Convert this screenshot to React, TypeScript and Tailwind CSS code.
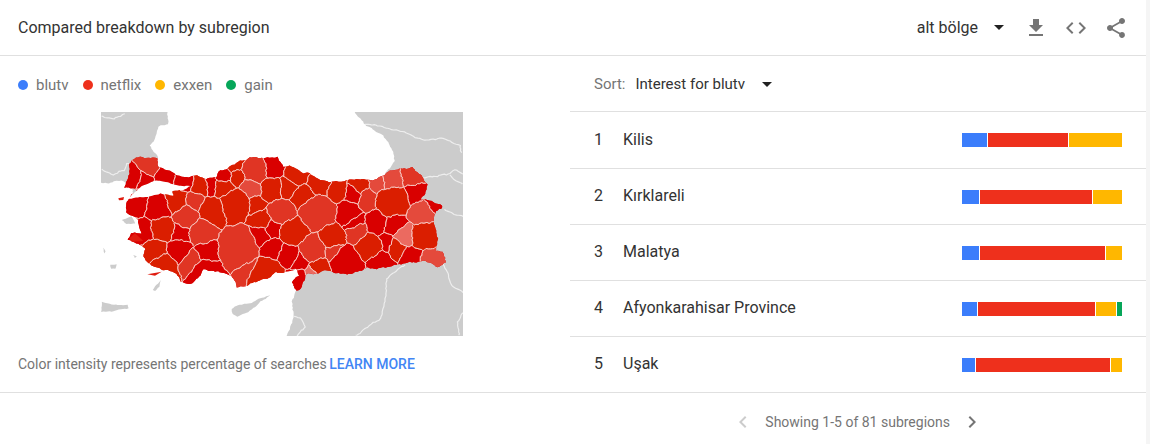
type Pt = [number, number];

const D = "#d90000", M = "#da1e00", L = "#e03524", P = "#e44a3c", X = "#eb6a60";

const provinces: [string, string][] = [
  [D, "120,175 147,168 148,205 135,225 132,248 105,250 115,215"],
  [L, "150,155 200,160 205,185 190,195 150,205 148,175"],
  [D, "150,207 190,197 178,215 150,226 140,246 136,226"],
  [D, "205,190 255,212 255,228 220,225 205,215"],
  [D, "258,212 315,215 310,235 275,240 258,230"],
  [D, "110,285 150,258 175,265 172,300 150,322 105,325 115,300"],
  [D, "175,270 210,270 250,320 235,345 200,335 175,332 172,300"],
  [M, "212,265 295,265 290,300 250,320"],
  [L, "295,270 330,285 322,300 295,307"],
  [M, "320,215 350,225 350,250 305,265"],
  [D, "350,225 385,225 370,245 350,250"],
  [D, "378,205 420,190 420,205 400,222 380,222"],
  [M, "420,175 450,170 455,190 420,198"],
  [L, "455,165 525,160 535,205 520,235 495,215 440,225 465,195"],
  [D, "530,165 565,155 585,205 560,205 540,190"],
  [M, "410,220 460,190 465,205 435,235"],
  [M, "345,270 395,235 430,225 438,240 390,265"],
  [P, "440,240 490,225 515,240 515,270 470,255"],
  [M, "400,280 430,245 470,260 490,280 470,330 470,345 400,355 410,320 395,290"],
  [M, "330,290 395,290 410,320 400,345 340,355 325,320"],
  [L, "250,325 295,307 322,320 325,345 300,365 255,350"],
  [M, "175,337 235,350 255,365 245,405 205,395 170,380"],
  [D, "140,340 175,335 170,385 210,400 160,405 120,410 150,370"],
  [D, "255,370 300,365 295,395 250,405"],
  [L, "300,370 345,345 390,345 385,375 350,395 300,430 290,420"],
  [D, "245,410 290,395 295,425 275,445 275,495 240,465"],
  [M, "165,410 240,420 240,445 175,455 160,440"],
  [M, "170,455 240,450 270,495 260,510 215,490 175,480"],
  [L, "280,440 320,440 350,470 310,470 285,490 275,480"],
  [D, "310,435 360,392 385,425 375,465 350,465 330,440"],
  [D, "265,510 295,480 350,470 375,465 415,490 435,520 438,545 400,510 340,495 325,520 300,540 270,530"],
  [L, "390,360 465,345 480,380 470,415 530,455 525,470 470,455 445,490 440,515 375,465 385,425 378,375"],
  [L, "447,490 470,457 525,468 520,475 470,490 450,515"],
  [M, "442,520 452,492 530,472 570,465 605,495 620,515 560,510 520,530 440,550"],
  [M, "475,320 495,275 515,285 520,305 485,330"],
  [M, "480,335 520,310 545,340 525,360 500,365"],
  [D, "470,410 500,365 525,360 530,400 525,410 510,420"],
  [D, "530,365 545,340 565,360 565,395 535,400"],
  [D, "515,420 535,405 575,410 570,440 550,460 530,455"],
  [M, "515,295 530,215 560,225 565,290"],
  [M, "585,180 610,180 640,205 665,205 660,225 635,230 590,225 565,210"],
  [M, "565,230 620,240 640,232 610,265 590,260 570,255"],
  [M, "590,285 640,240 695,265 650,275 620,295"],
  [M, "665,215 720,235 710,255 695,260 650,240"],
  [L, "520,300 590,290 615,310 605,345 565,355 535,330"],
  [L, "620,300 695,275 725,265 740,300 735,350 700,355 675,385 610,345"],
  [M, "565,380 605,345 660,360 650,405 610,410 575,410"],
  [D, "555,450 580,445 620,400 635,410 610,460 612,490 570,480"],
  [D, "612,460 625,430 645,475 620,490"],
  [D, "620,495 650,500 635,540 620,560 605,530"],
  [L, "630,415 655,390 700,400 710,460 665,470 650,470"],
  [M, "650,490 680,470 715,465 710,500 670,510"],
  [X, "650,498 670,490 695,508 665,510"],
  [M, "690,360 735,350 745,395 775,410 750,425 705,435 700,390"],
  [L, "695,440 750,425 770,420 745,445 700,460"],
  [D, "715,465 775,425 810,445 830,490 770,510 715,495"],
  [D, "820,455 875,450 910,460 905,480 840,490"],
  [M, "780,420 815,410 880,385 885,430 870,450 815,450"],
  [L, "735,375 815,375 840,350 840,375 800,400 765,405"],
  [D, "755,345 830,320 815,350 800,370 755,365"],
  [D, "735,300 790,290 850,320 755,345 740,370"],
  [D, "835,330 880,335 880,385 845,380"],
  [D, "880,345 945,325 960,350 925,365 905,390 885,385"],
  [X, "905,395 935,370 985,360 955,415 925,410"],
  [M, "900,410 925,415 965,440 905,445 895,430"],
  [D, "885,390 905,395 895,425 875,450"],
  [D, "920,450 990,445 1000,440 990,465 915,475"],
  [P, "995,465 1005,440 1060,440 1065,475 1040,485 1000,475"],
  [M, "990,340 1030,345 1045,400 1035,435 990,440 960,420 985,365"],
  [P, "945,300 990,295 1050,310 1030,335 990,335 965,355"],
  [D, "995,295 1010,285 1055,298 1050,310"],
  [D, "945,265 985,225 1010,250 995,290 950,290"],
  [L, "950,190 995,215 970,250 945,230"],
  [P, "890,205 945,195 945,225 915,240 880,265 860,255"],
  [P, "845,225 885,210 880,240 850,260"],
  [M, "850,270 915,235 945,235 950,285 945,320 900,345 855,320"],
  [L, "805,285 825,260 850,262 850,290 830,295"],
  [D, "760,240 810,255 795,298 760,270"],
  [M, "775,225 840,230 830,255 780,240"],
  [M, "720,235 775,225 760,260 760,285 735,285"],
];

const parse = (s: string): Pt[] => s.split(" ").map((t) => t.split(",").map(Number) as Pt);

function shift([x, y]: Pt, a: number): Pt {
  return [
    x + a * (0.7 * Math.sin(y / 17 + 1.3) * Math.cos(x / 23) + 0.6 * Math.sin(x / 7 + y / 9) + 0.4 * Math.sin(x / 3.1 + y / 2.3)),
    y + a * (0.7 * Math.cos(x / 19 + 0.7) * Math.sin(y / 21) + 0.6 * Math.cos(x / 8 - y / 6) + 0.4 * Math.cos(x / 2.7 - y / 3.3)),
  ];
}

function subdiv(p: Pt, q: Pt, a: number, inclusive: boolean): string[] {
  const out: string[] = [];
  const n = Math.max(1, Math.round(Math.hypot(q[0] - p[0], q[1] - p[1]) / 6));
  for (let k = 0; k < (inclusive ? n + 1 : n); k++) {
    const r = shift([p[0] + ((q[0] - p[0]) * k) / n, p[1] + ((q[1] - p[1]) * k) / n], a);
    out.push(`${r[0].toFixed(1)},${r[1].toFixed(1)}`);
  }
  return out;
}

const wiggle = (pts: Pt[], a = 4): string =>
  pts.flatMap((p, i) => subdiv(p, pts[(i + 1) % pts.length], a, false)).join(" ");

function wiggleOpen(s: string, a = 2.5): string {
  const pts = parse(s);
  return pts.slice(0, -1).flatMap((p, i) => subdiv(p, pts[i + 1], a, true)).join(" ");
}

function polyArea(p: Pt[]) {
  let s = 0;
  p.forEach((a, i) => {
    const b = p[(i + 1) % p.length];
    s += a[0] * b[1] - b[0] * a[1];
  });
  return Math.abs(s / 2);
}

const seeds = provinces.map(([, s]) => {
  const p = parse(s);
  const c: Pt = [p.reduce((t, v) => t + v[0], 0) / p.length, p.reduce((t, v) => t + v[1], 0) / p.length];
  return { c, w: (polyArea(p) / Math.PI) * 0.7 };
});

function clip(poly: Pt[], ax: number, ay: number, b: number): Pt[] {
  const out: Pt[] = [];
  poly.forEach((p, i) => {
    const q = poly[(i + 1) % poly.length];
    const fp = ax * p[0] + ay * p[1] - b;
    const fq = ax * q[0] + ay * q[1] - b;
    if (fp <= 0) out.push(p);
    if (fp <= 0 !== fq <= 0) {
      const t = fp / (fp - fq);
      out.push([p[0] + (q[0] - p[0]) * t, p[1] + (q[1] - p[1]) * t]);
    }
  });
  return out;
}

const cells = seeds.map((s, i) => {
  let poly: Pt[] = [[60, 120], [1100, 120], [1100, 580], [60, 580]];
  seeds.forEach((o, j) => {
    if (i === j || poly.length === 0) return;
    const ax = 2 * (o.c[0] - s.c[0]);
    const ay = 2 * (o.c[1] - s.c[1]);
    const b = o.c[0] ** 2 + o.c[1] ** 2 - s.c[0] ** 2 - s.c[1] ** 2 - o.w + s.w;
    poly = clip(poly, ax, ay, b);
  });
  return poly;
});

const silhouette = parse(
  "120,175 128,165 150,155 170,160 200,160 205,185 240,200 262,212 300,215 320,212 350,222 378,218 385,200 415,190 445,170 480,157 525,160 545,160 565,153 580,185 600,180 625,195 640,205 660,203 680,222 720,232 770,225 800,222 840,228 885,208 905,195 950,190 965,185 995,213 1010,235 1008,265 995,285 1030,290 1055,298 1055,308 1035,318 1030,335 1040,390 1045,400 1035,435 1060,440 1067,475 1040,487 1030,475 1000,468 945,475 905,482 860,490 830,490 790,505 740,505 710,495 690,505 650,505 645,525 630,555 620,560 605,530 625,510 620,490 600,500 575,505 560,500 530,520 500,530 470,540 440,548 425,510 385,500 340,495 325,520 295,540 270,530 260,505 215,495 170,470 160,450 165,435 150,420 115,405 125,385 155,385 150,365 140,340 108,325 110,295 125,270 150,258 135,250 105,250 115,215"
);

const borders = [
  "33,35 70,42 105,25",
  "33,195 70,208 105,195 112,175 120,175",
  "825,55 900,70 960,90 1010,105 1050,100 1110,120 1115,145",
  "995,218 1070,210 1095,195 1119,205",
  "1080,210 1100,225 1119,235",
  "1065,310 1090,325 1119,335",
  "945,480 890,520 885,600 870,640 795,693",
  "1060,480 1075,510 1085,540 1119,565",
  "1119,620 1105,650 1105,693",
  "610,635 635,640 645,665 620,693",
];

const islands = [
  "35,590 70,600 112,600 115,610 70,618 35,620",
  "425,612 445,600 480,595 510,580 540,572 510,590 490,610 470,625 440,635 428,625",
  "188,555 212,525 208,545 195,558",
  "95,345 125,335 135,355 110,358",
  "60,480 78,478 75,492 62,490",
  "40,430 48,440 44,445",
  "130,450 140,455 134,460",
];

function TurkeyMap() {
  return (
    <svg viewBox="33 21 1086 672" className="block h-[224px] w-[362px] blur-[0.3px]">
      <defs>
        <clipPath id="tr">
          <polygon points={wiggle(silhouette, 2.5)} />
        </clipPath>
      </defs>
      <rect x="33" y="21" width="1086" height="672" fill="#cccccc" />
      <polygon
        fill="#ffffff"
        points={wiggle(parse("235,10 232,55 205,65 195,100 178,122 200,150 205,185 300,240 700,260 880,240 885,208 915,170 905,130 880,90 830,60 785,10"), 2.5)}
      />
      <polygon
        fill="#ffffff"
        points={wiggle(parse("20,235 100,228 125,250 150,300 200,420 300,450 500,450 620,480 640,520 615,565 605,590 612,625 590,700 20,700"), 2.5)}
      />
      {islands.map((p) => (
        <polygon key={p} points={wiggle(parse(p), 1.5)} fill="#cccccc" />
      ))}
      {borders.map((p) => (
        <polyline key={p} points={wiggleOpen(p)} fill="none" stroke="#eeeeee" strokeWidth="3.5" strokeLinejoin="round" />
      ))}
      <g clipPath="url(#tr)">
        <rect x="33" y="21" width="1086" height="672" fill={D} />
        {cells.map((c, i) =>
          c.length > 2 ? (
            <polygon
              key={i}
              points={wiggle(c, 3.5)}
              fill={provinces[i][0]}
              stroke="#f7c8c2"
              strokeWidth="3"
              strokeLinejoin="round"
            />
          ) : null
        )}
      </g>
      <polygon fill="#ffffff" points={wiggle(parse("115,280 160,240 200,225 255,240 300,243 280,255 245,258 250,273 210,265 180,275 120,280"), 1.5)} />
      <polygon fill="#e01c10" points="85,280 102,276 100,285 87,286" />
      <polygon fill="#e01c10" points="118,400 135,385 160,408 125,410" />
      <polygon fill="#e01c10" points="172,508 215,500 195,512" />
    </svg>
  );
}

const I = ({ d, className }: { d: string; className: string }) => (
  <svg viewBox="0 0 24 24" width="24" height="24" className={className} fill="currentColor">
    <path d={d} />
  </svg>
);

const rows: [string, number, number, number, number][] = [
  ["Kilis", 25, 80, 53, 0],
  ["Kırklareli", 17, 112, 29, 0],
  ["Malatya", 17, 125, 16, 0],
  ["Afyonkarahisar Province", 15, 117, 20, 5],
  ["Uşak", 13, 134, 11, 0],
];

const legend = [
  ["blutv", "bg-[#3b7dfb]"],
  ["netflix", "bg-[#ee301c]"],
  ["exxen", "bg-[#ffb700]"],
  ["gain", "bg-[#06a659]"],
];

export default function App() {
  return (
    <div className="flex h-[444px] w-[1150px] overflow-hidden bg-white font-['Roboto',sans-serif]">
      <div className="w-[1146px] shrink-0">
        <header className="flex h-[56px] items-center border-b border-[#e0e0e0] pl-[18px] pr-[18px]">
          <h2 className="flex-1 text-[16px] text-[#333333]">Compared breakdown by subregion</h2>
          <span className="text-[16px] text-[#333333]">alt bölge</span>
          <span className="ml-[16px] mr-[20px] h-0 w-0 border-x-[5px] border-t-[5px] border-x-transparent border-t-[#212121]" />
          <div className="flex gap-4 text-[#757575]">
            <I className="" d="M19 9h-4V3H9v6H5l7 7 7-7zM5 18v2h14v-2H5z" />
            <I className="" d="M9.4 16.6L4.8 12l4.6-4.6L8 6l-6 6 6 6 1.4-1.4zm5.2 0l4.6-4.6-4.6-4.6L16 6l6 6-6 6-1.4-1.4z" />
            <I className="" d="M18 16.08c-.76 0-1.44.3-1.96.77L8.91 12.7c.05-.23.09-.46.09-.7s-.04-.47-.09-.7l7.05-4.11c.54.5 1.25.81 2.04.81 1.66 0 3-1.34 3-3s-1.34-3-3-3-3 1.34-3 3c0 .24.04.47.09.7L8.04 9.81C7.5 9.31 6.79 9 6 9c-1.66 0-3 1.34-3 3s1.34 3 3 3c.79 0 1.5-.31 2.04-.81l7.12 4.16c-.05.21-.08.43-.08.65 0 1.61 1.31 2.92 2.92 2.92 1.61 0 2.92-1.31 2.92-2.92s-1.31-2.92-2.92-2.92z" />
          </div>
        </header>
        <div className="flex h-[337px] border-b border-[#e0e0e0]">
          <section className="w-[570px] shrink-0">
            <div className="flex h-[56px] items-center pl-[18px] pt-[2px]">
              {legend.map(([name, color]) => (
                <div key={name} className="mr-[14px] flex items-center gap-[8px]">
                  <span className={`h-[10px] w-[10px] rounded-full ${color}`} />
                  <span className="text-[15px] text-[#757575]">{name}</span>
                </div>
              ))}
            </div>
            <div className="flex justify-center">
              <div className="mr-[6px]">
                <TurkeyMap />
              </div>
            </div>
            <p className="mt-[19px] pl-[18px] text-[14px] leading-[18px] text-[#757575]">
              Color intensity represents percentage of searches{" "}
              <span className="-ml-px font-medium text-[#4285f4]">LEARN MORE</span>
            </p>
          </section>
          <section className="flex-1">
            <div className="flex h-[56px] items-center border-b border-[#e0e0e0] pl-[24px] pt-[1px]">
              <span className="text-[15px] text-[#757575]">Sort:</span>
              <span className="ml-[10px] text-[15px] text-[#333333]">Interest for blutv</span>
              <span className="ml-[17px] h-0 w-0 border-x-[5px] border-t-[5px] border-x-transparent border-t-[#212121]" />
            </div>
            {rows.map(([name, a, b, c, d], i) => (
              <div
                key={name}
                className={`flex items-center border-b pl-[24px] pr-[24px] ${i === 0 ? "h-[57px]" : "h-[56px]"} ${i < 4 ? "border-[#e0e0e0]" : "border-transparent"}`}
              >
                <span className={`w-[29px] text-[16px] text-[#333333] ${i > 0 ? "mb-[2px]" : ""}`}>{i + 1}</span>
                <span className={`flex-1 text-[16px] text-[#333333] ${i > 0 ? "mb-[2px]" : ""}`}>{name}</span>
                <div className="flex h-[14px] w-[160px] gap-[1px]">
                  <div className="bg-[#3b7dfb]" style={{ width: a }} />
                  <div className="bg-[#ee301c]" style={{ width: b }} />
                  <div className="bg-[#ffb700]" style={{ width: c }} />
                  {d > 0 && <div className="bg-[#06a659]" style={{ width: d }} />}
                </div>
              </div>
            ))}
          </section>
        </div>
        <footer className="flex items-center justify-end pr-[162px] pt-[17px] text-[14px] text-[#757575]">
          <I className="text-[#cccccc]" d="M15.41 7.41L14 6l-6 6 6 6 1.41-1.41L10.83 12z" />
          <span className="ml-[10px] mr-[10px]">Showing 1-5 of 81 subregions</span>
          <I className="" d="M10 6L8.59 7.41 13.17 12l-4.58 4.59L10 18l6-6z" />
        </footer>
      </div>
      <div className="flex-1 bg-[#f5f5f5]" />
    </div>
  );
}
